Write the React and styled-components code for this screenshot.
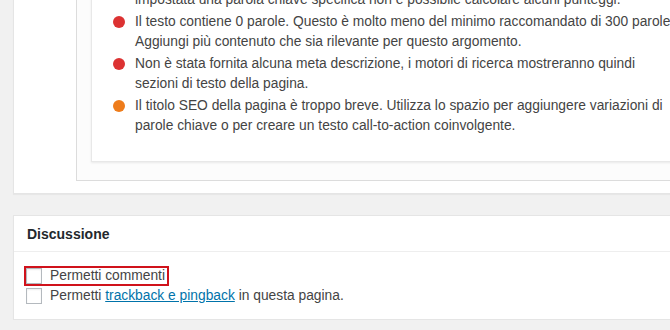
import React from "react";
import styled, { createGlobalStyle } from "styled-components";

const GlobalStyle = createGlobalStyle`
  html, body {
    margin: 0;
    padding: 0;
    background: #f1f1f1;
    overflow: hidden;
  }
  body {
    font-family: "Liberation Sans", Arial, sans-serif;
    font-size: 13.8px;
    color: #444;
  }
`;

const Page = styled.div`
  width: 720px;
  margin-top: -55px;
  padding-left: 13px;
  display: flex;
  flex-direction: column;
  gap: 21px;
`;

const Postbox = styled.div`
  background: #fff;
  border: 1px solid #e5e5e5;
  border-right: none;
  box-shadow: 0 1px 1px rgba(0, 0, 0, 0.04);
`;

const OuterBody = styled.div`
  padding: 0 0 12px 62px;
`;

const InnerBox = styled.div`
  background: #fcfcfc;
  border-left: 1px solid #dcdcdc;
  border-bottom: 1px solid #dcdcdc;
  padding: 0 0 18px 14px;
`;

const Card = styled.div`
  background: #fff;
  border: 1px solid #e8e8e8;
  border-top: none;
  border-right: none;
  box-shadow: 0 1px 2px rgba(0, 0, 0, 0.08);
  padding: 24px 0 25px 21px;
`;

const List = styled.ul`
  list-style: none;
  margin: 0;
  padding: 0;
  display: flex;
  flex-direction: column;
  gap: 2px;
`;

const Item = styled.li`
  display: flex;
  align-items: flex-start;
  gap: 10px;
  line-height: 20px;
`;

const Bullet = styled.span`
  flex: none;
  width: 12px;
  height: 12px;
  margin-top: 4px;
  border-radius: 50%;
  background: ${(p) => (p.$level === "bad" ? "#dc3232" : "#ee7c1b")};
`;

const Lines = styled.div`
  display: flex;
  flex-direction: column;
  white-space: nowrap;
`;

const Header = styled.h2`
  margin: 0;
  height: 35px;
  padding: 0 13px;
  display: flex;
  align-items: center;
  font-size: 14px;
  font-weight: bold;
  color: #23282d;
  border-bottom: 1px solid #eee;
`;

const Inside = styled.div`
  padding: 16px 12px 15px 12px;
  display: flex;
  flex-direction: column;
  gap: 4px;
`;

const Label = styled.label`
  align-self: flex-start;
  display: flex;
  align-items: center;
  gap: 8px;
  line-height: 16px;
  color: #444;
  outline: ${(p) => (p.$highlight ? "2px solid #d0121b" : "none")};
  outline-offset: 0;
  padding-right: 2px;
`;

const Check = styled.span`
  flex: none;
  width: 16px;
  height: 16px;
  box-sizing: border-box;
  border: 1px solid #b4b9be;
  background: #fff;
  box-shadow: inset 0 1px 2px rgba(0, 0, 0, 0.07);
`;

const Link = styled.a`
  color: #0073aa;
  text-decoration: underline;
`;

const checks = [
  {
    level: "bad",
    lines: [
      "Non hai impostato una frase chiave per questo contenuto. Dal momento che non hai",
      "impostata una parola chiave specifica non è possibile calcolare alcuni punteggi.",
    ],
  },
  {
    level: "bad",
    lines: [
      "Il testo contiene 0 parole. Questo è molto meno del minimo raccomandato di 300 parole.",
      "Aggiungi più contenuto che sia rilevante per questo argomento.",
    ],
  },
  {
    level: "bad",
    lines: [
      "Non è stata fornita alcuna meta descrizione, i motori di ricerca mostreranno quindi",
      "sezioni di testo della pagina.",
    ],
  },
  {
    level: "ok",
    lines: [
      "Il titolo SEO della pagina è troppo breve. Utilizza lo spazio per aggiungere variazioni di",
      "parole chiave o per creare un testo call-to-action coinvolgente.",
    ],
  },
];

export default function App() {
  return (
    <>
      <GlobalStyle />
      <Page>
        <Postbox>
          <OuterBody>
            <InnerBox>
              <Card>
                <List>
                  {checks.map((c, i) => (
                    <Item key={i}>
                      <Bullet $level={c.level} />
                      <Lines>
                        {c.lines.map((l, j) => (
                          <span key={j}>{l}</span>
                        ))}
                      </Lines>
                    </Item>
                  ))}
                </List>
              </Card>
            </InnerBox>
          </OuterBody>
        </Postbox>
        <Postbox>
          <Header>Discussione</Header>
          <Inside>
            <Label $highlight>
              <Check />
              Permetti commenti
            </Label>
            <Label>
              <Check />
              <span>
                Permetti <Link href="#">trackback e pingback</Link> in questa pagina.
              </span>
            </Label>
          </Inside>
        </Postbox>
      </Page>
    </>
  );
}
